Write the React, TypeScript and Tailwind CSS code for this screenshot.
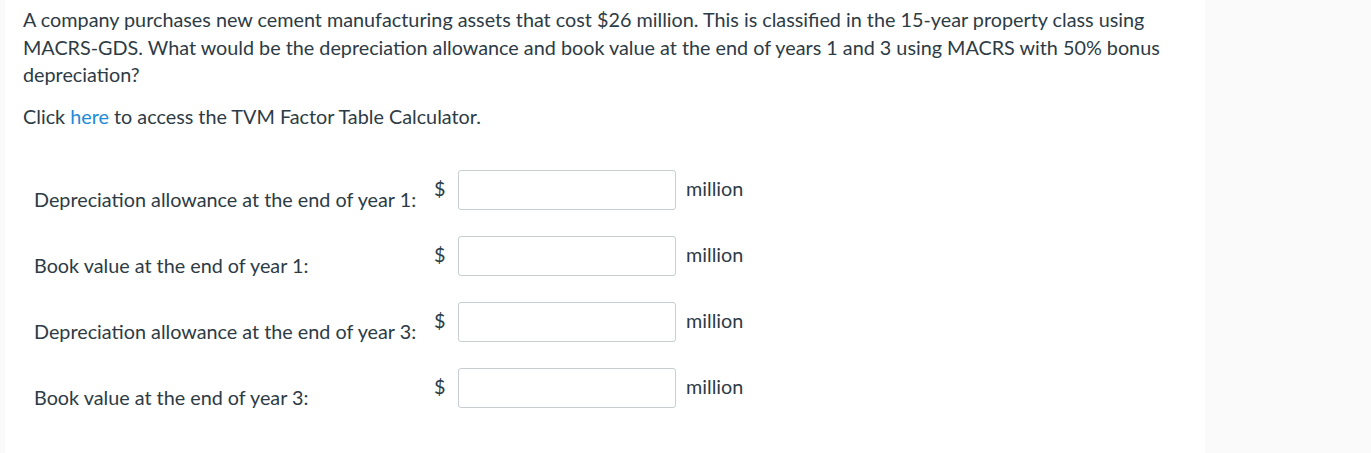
import React from 'react';

const rows = [
  'Depreciation allowance at the end of year 1:',
  'Book value at the end of year 1:',
  'Depreciation allowance at the end of year 3:',
  'Book value at the end of year 3:',
];

export default function App() {
  return (
    <main
      className="min-h-screen bg-[#fafafa] flex text-[#2d3b45]"
      style={{ fontFamily: 'Lato, "Noto Sans", sans-serif' }}
    >
      <section className="ml-[5px] w-[1200px] min-h-[453px] bg-white px-[18px] pt-[6px] text-[19.8px] leading-[27.5px]">
        <p className="mb-[14px]">
          A company purchases new cement manufacturing assets that cost $26 million. This is classified in the 15-year
          property class using MACRS-GDS. What would be the depreciation allowance and book value at the end of years 1
          and 3 using MACRS with 50% bonus depreciation?
        </p>
        <p>
          Click <a className="text-[#1d8ad7]">here</a> to access the TVM Factor Table Calculator.
        </p>

        <div className="mt-[40px]">
          {rows.map((label) => (
            <div key={label} className="flex items-start h-[66px] leading-[27px]">
              <div className="w-[411px] pl-[11px] pt-[16px]">{label}</div>
              <div className="w-[24px] pt-[5px]">$</div>
              <input
                type="text"
                aria-label={label}
                className="w-[218px] h-[40px] border border-[#c7cdd1] rounded-[3px] bg-white px-2 outline-none"
              />
              <div className="ml-[10px] pt-[5px]">million</div>
            </div>
          ))}
        </div>
      </section>
    </main>
  );
}
